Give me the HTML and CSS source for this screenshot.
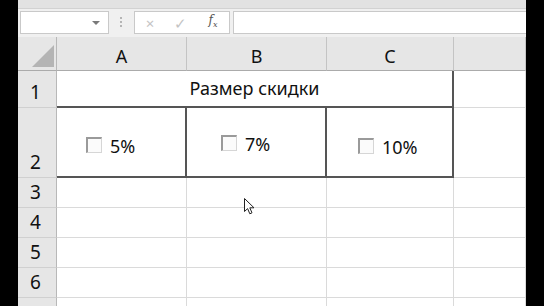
FILE: index.html
```html
<!DOCTYPE html>
<html lang="ru">
<head>
  <meta charset="UTF-8" />
  <title>Размер скидки</title>
  <link rel="stylesheet" href="styles.css">
</head>
<body>

  <div class="screen">
    <div class="topband"></div>

    <div class="formula-bar">
      <div class="name-box"><span class="drop"></span></div>
      <div class="grip"><i></i><i></i><i></i></div>
      <div class="fx-buttons">
        <span class="fx-btn">&times;</span>
        <span class="fx-btn">&#10003;</span>
        <span class="fx-btn fx"><i>f</i><sub>x</sub></span>
      </div>
      <div class="formula-input"></div>
    </div>

    <div class="sheet">
      <!-- заголовки столбцов -->
      <div class="corner"><span class="corner-tri"></span></div>
      <div class="col-head">A</div>
      <div class="col-head">B</div>
      <div class="col-head">C</div>
      <div class="col-head"></div>

      <!-- строка 1 -->
      <div class="row-head">1</div>
      <div class="cell merged bd-bottom bd-right">Размер скидки</div>
      <div class="cell"></div>

      <!-- строка 2 -->
      <div class="row-head">2</div>
      <div class="cell opt opt-a bd-bottom bd-right"><span class="check"></span>5%</div>
      <div class="cell opt opt-b bd-bottom bd-right"><span class="check"></span>7%</div>
      <div class="cell opt opt-c bd-bottom bd-right"><span class="check"></span>10%</div>
      <div class="cell"></div>

      <div class="row-head">3</div>
      <div class="cell"></div><div class="cell"></div><div class="cell"></div><div class="cell"></div>
      <div class="row-head">4</div>
      <div class="cell"></div><div class="cell"></div><div class="cell"></div><div class="cell"></div>
      <div class="row-head">5</div>
      <div class="cell"></div><div class="cell"></div><div class="cell"></div><div class="cell"></div>
      <div class="row-head">6</div>
      <div class="cell"></div><div class="cell"></div><div class="cell"></div><div class="cell"></div>
      <div class="row-head"></div>
      <div class="cell"></div><div class="cell"></div><div class="cell"></div><div class="cell"></div>
    </div>

    <svg class="pointer" width="12" height="18" viewBox="0 0 12 18">
      <path d="M0.5 0.5 L0.5 13.5 L3.6 10.6 L5.8 15.8 L8 14.8 L5.8 9.8 L10 9.8 Z" fill="#fff" stroke="#222" stroke-width="1" stroke-linejoin="round"/>
    </svg>
  </div>

</body>
</html>
```

FILE: styles.css
```css
body {
  margin: 0;
  padding: 0;
  background-color: #000;
  font-family: "Noto Sans", "Open Sans", sans-serif;
  color: #111;
  overflow: hidden;
}
.screen {
  position: relative;
  margin: 0 18px;
  height: 306px;
  background-color: #fff;
  overflow: hidden;
}
.topband {
  height: 8px;
  background-color: #e2e2e2;
  border-bottom: 1px solid #d2d2d2;
}
.formula-bar {
  display: flex;
  align-items: flex-start;
  height: 28px;
  padding-top: 2px;
  box-sizing: border-box;
  background-color: #f0f0f0;
}
.name-box {
  position: relative;
  width: 89px;
  height: 23px;
  margin-left: 2px;
  background: #fff;
  border: 1px solid #c9c9c9;
  box-sizing: border-box;
}
.drop {
  position: absolute;
  right: 8px;
  top: 9px;
  border-left: 4px solid transparent;
  border-right: 4px solid transparent;
  border-top: 4px solid #7a7a7a;
}
.grip {
  display: flex;
  flex-direction: column;
  gap: 2px;
  width: 2px;
  margin: 6px 12px 0 11px;
}
.grip i {
  width: 2px;
  height: 2px;
  background: #b5b5b5;
}
.fx-buttons {
  display: flex;
  align-items: center;
  width: 96px;
  height: 23px;
  background: #fff;
  border: 1px solid #c9c9c9;
  box-sizing: border-box;
}
.fx-btn {
  width: 30px;
  text-align: center;
  font-size: 15px;
  line-height: 20px;
  color: #c4c4c4;
}
.fx-btn.fx {
  font-family: "DejaVu Serif", "Liberation Serif", serif;
  color: #555;
  font-size: 12px;
  margin-left: 3px;
}
.fx-btn.fx sub {
  font-size: 8px;
  font-style: italic;
}
.formula-input {
  flex: 1;
  height: 23px;
  margin-left: 3px;
  background: #fff;
  border: 1px solid #c9c9c9;
  border-right: none;
  box-sizing: border-box;
}
.sheet {
  display: grid;
  grid-template-columns: 39px 130px 140px 127px 1fr;
  grid-template-rows: 34px 37px 70px 30px 30px 30px 30px 30px;
}
.sheet > div {
  box-sizing: border-box;
}
.corner {
  position: relative;
  background: #e6e6e6;
  border-right: 1px solid #b8b8b8;
  border-bottom: 1px solid #ababab;
}
.corner-tri {
  position: absolute;
  right: 2px;
  bottom: 3px;
  width: 0;
  height: 0;
  border-left: 22px solid transparent;
  border-bottom: 22px solid #b4b4b4;
}
.col-head {
  display: flex;
  align-items: center;
  justify-content: center;
  padding-top: 5px;
  font-size: 18px;
  background: #e6e6e6;
  border-right: 1px solid #c4c4c4;
  border-bottom: 1px solid #ababab;
}
.row-head {
  display: flex;
  align-items: flex-end;
  justify-content: center;
  padding: 0 3px 3px 0;
  font-size: 19px;
  line-height: 23px;
  background: #e6e6e6;
  border-right: 1px solid #b8b8b8;
  border-bottom: 1px solid #d0d0d0;
}
.cell {
  border-right: 1px solid #dadada;
  border-bottom: 1px solid #dadada;
  font-size: 18px;
}
.merged {
  grid-column: span 3;
  display: flex;
  align-items: flex-end;
  justify-content: center;
  padding-bottom: 6px;
}
.bd-bottom {
  border-bottom: 2px solid #555;
}
.bd-right {
  border-right: 2px solid #555;
}
.opt {
  display: flex;
  align-items: flex-start;
  gap: 8px;
}
.opt-a {
  padding: 26px 0 0 29px;
}
.opt-b {
  padding: 24px 0 0 34px;
}
.opt-c {
  padding: 27px 0 0 31px;
}
.check {
  width: 16px;
  height: 16px;
  margin-top: 3px;
  background: #fbfbfb;
  border: 1px solid #d6d6d6;
  border-left: 2px solid #9a9a9a;
  border-top: 2px solid #9a9a9a;
  box-sizing: border-box;
}
.pointer {
  position: absolute;
  left: 226px;
  top: 198px;
}
```
